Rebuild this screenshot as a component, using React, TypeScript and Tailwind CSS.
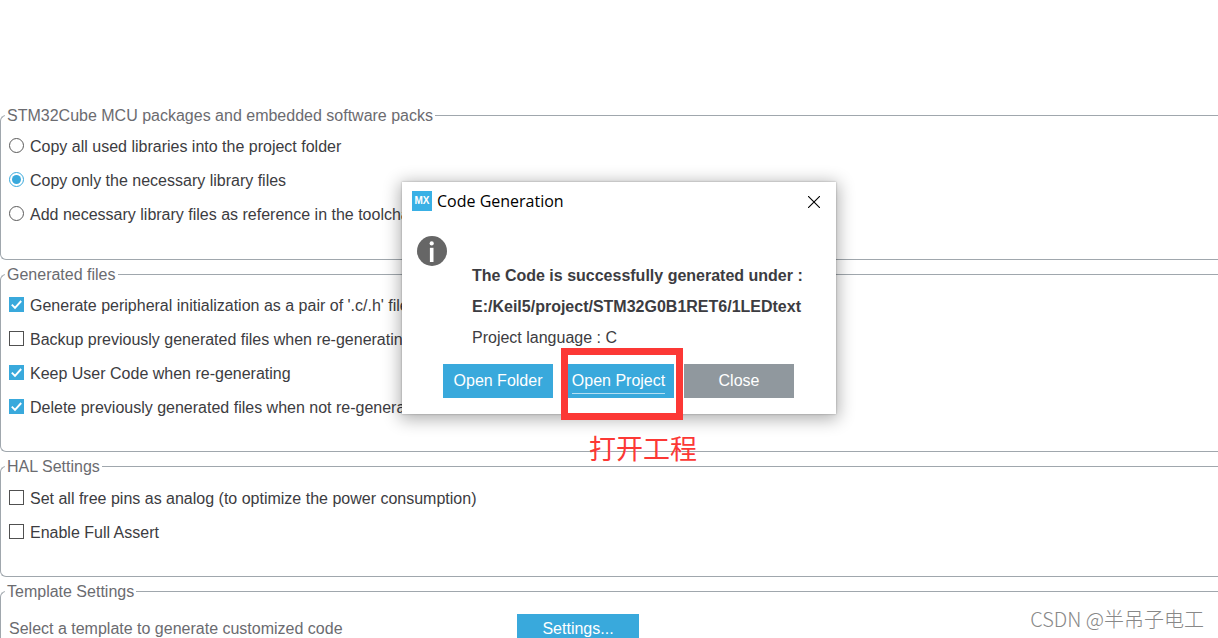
import type { ReactNode } from 'react';

type OptionProps = {
  id: string;
  label: string;
  checked?: boolean;
};

function Group({ title, className = '', children }: { title: string; className?: string; children: ReactNode }) {
  return (
    <fieldset className={`min-w-0 rounded-l-md border border-r-0 border-[#a0a7ad] pl-2 ${className}`}>
      <legend className="-ml-1 px-0.5 pt-0.5 text-base leading-[22px] text-[#6b6b70]">{title}</legend>
      {children}
    </fieldset>
  );
}

function RadioOption({ id, label, checked }: OptionProps) {
  return (
    <div className="flex h-[34px] items-center gap-1.5">
      <span className="grid size-[15px] place-items-center">
        <input
          id={id}
          type="radio"
          name="library-copy"
          defaultChecked={checked}
          className="peer col-start-1 row-start-1 size-[15px] appearance-none rounded-full border border-[#5a5a5a] bg-white checked:border-[#39a9dc]"
        />
        <span className="pointer-events-none col-start-1 row-start-1 hidden size-[9px] rounded-full bg-[#39a9dc] peer-checked:block" />
      </span>
      <label htmlFor={id} className="whitespace-nowrap pt-1">
        {label}
      </label>
    </div>
  );
}

function CheckOption({ id, label, checked }: OptionProps) {
  return (
    <div className="flex h-[34px] items-center gap-1.5">
      <span className="grid size-[15px] place-items-center">
        <input
          id={id}
          type="checkbox"
          defaultChecked={checked}
          className="peer col-start-1 row-start-1 size-[15px] appearance-none border border-[#505050] bg-white checked:border-[#39a9dc] checked:bg-[#39a9dc]"
        />
        <svg
          viewBox="0 0 15 15"
          className="pointer-events-none col-start-1 row-start-1 hidden size-[15px] peer-checked:block"
          fill="none"
          stroke="#fff"
          strokeWidth="1.9"
        >
          <path d="M2.8 7.6 6 10.9 12.2 4" />
        </svg>
      </span>
      <label htmlFor={id} className="whitespace-nowrap pt-1">
        {label}
      </label>
    </div>
  );
}

function CodeGenerationDialog() {
  return (
    <section
      role="dialog"
      aria-labelledby="dialog-title"
      className="absolute left-[402px] top-[182px] w-[434px] bg-white pb-4 shadow-[0_3px_16px_2px_rgba(0,0,0,0.32),0_0_2px_rgba(0,0,0,0.3)]"
    >
      <header className="flex h-10 items-center pl-2.5 pr-4">
        <svg viewBox="0 0 20 20" className="mb-0.5 size-5" aria-hidden="true">
          <rect width="20" height="20" fill="#39b0e5" />
          <text x="10" y="13.4" textAnchor="middle" fontFamily="Liberation Sans, sans-serif" fontSize="10" fontWeight="700" fill="#fff">
            MX
          </text>
        </svg>
        <h1 id="dialog-title" className="mb-0.5 ml-[5px] flex-1 font-['Open_Sans',sans-serif] text-base text-black">
          Code Generation
        </h1>
        <button type="button" aria-label="Close dialog">
          <svg viewBox="0 0 12 12" className="size-3" fill="none" stroke="#000" strokeWidth="1.1">
            <path d="M0 0 12 12M12 0 0 12" />
          </svg>
        </button>
      </header>

      <div className="flex gap-[25px] pl-[15px] pt-3.5">
        <svg viewBox="0 0 30 30" className="size-[30px]" aria-hidden="true">
          <circle cx="15" cy="15" r="15" fill="#666" />
          <circle cx="14.7" cy="7.4" r="2.1" fill="#fff" />
          <path d="M12.9 11.8h3.6v14.2h-3.6z" fill="#fff" />
        </svg>
        <div className="pt-6 leading-[31px]">
          <p className="font-bold">The Code is successfully generated under :</p>
          <p className="font-bold">E:/Keil5/project/STM32G0B1RET6/1LEDtext</p>
          <p>Project language : C</p>
        </div>
      </div>

      <div className="mt-[11px] flex gap-2.5 pl-[41px] text-white">
        <button type="button" className="h-[34px] w-[110px] bg-[#39a9dc]">
          Open Folder
        </button>
        <button type="button" className="h-[34px] w-[111px] bg-[#39a9dc]">
          <span className="border-b border-[#b5dff3] pb-1">Open Project</span>
        </button>
        <button type="button" className="h-[34px] w-[110px] bg-[#90989e]">
          Close
        </button>
      </div>
    </section>
  );
}

export default function App() {
  return (
    <main className="relative h-screen overflow-hidden bg-white pt-[103px] font-['Liberation_Sans',Arial,sans-serif] text-base text-[#3c3c41]">
      <form className="flex flex-col gap-0.5">
        <Group title="STM32Cube MCU packages and embedded software packs" className="pb-[29px] pt-px">
          <RadioOption id="copy-all" label="Copy all used libraries into the project folder" />
          <RadioOption id="copy-needed" label="Copy only the necessary library files" checked />
          <RadioOption id="add-reference" label="Add necessary library files as reference in the toolchain" />
        </Group>

        <Group title="Generated files" className="pb-7 pt-px">
          <CheckOption id="peripheral-pair" label="Generate peripheral initialization as a pair of '.c/.h' files" checked />
          <CheckOption id="backup" label="Backup previously generated files when re-generating" />
          <CheckOption id="keep-user-code" label="Keep User Code when re-generating" checked />
          <CheckOption id="delete-previous" label="Delete previously generated files when not re-generated" checked />
        </Group>

        <Group title="HAL Settings" className="pb-7 pt-0.5">
          <CheckOption id="free-pins" label="Set all free pins as analog (to optimize the power consumption)" />
          <CheckOption id="full-assert" label="Enable Full Assert" />
        </Group>

        <Group title="Template Settings" className="pb-7 pt-[11px]">
          <div className="flex items-start">
            <p className="w-[508px] pt-[3px] text-[#6b6b70]">Select a template to generate customized code</p>
            <button type="button" className="h-[34px] w-[122px] bg-[#39a9dc] pb-1 text-white">
              Settings...
            </button>
          </div>
        </Group>
      </form>

      <CodeGenerationDialog />

      <div className="pointer-events-none absolute left-[561px] top-[348px] h-[72px] w-[122px] border-[7px] border-[#fc3835]" />
      <p className="absolute left-[589px] top-[430px] whitespace-nowrap font-['Noto_Sans_CJK_SC',sans-serif] text-[27px] leading-9 text-[#fc3835]">
        打开工程
      </p>
      <p className="absolute bottom-[7px] right-3.5 whitespace-nowrap font-['Noto_Sans_CJK_SC',sans-serif] text-xl font-light leading-6 text-[#888]">
        CSDN @半吊子电工
      </p>
    </main>
  );
}
